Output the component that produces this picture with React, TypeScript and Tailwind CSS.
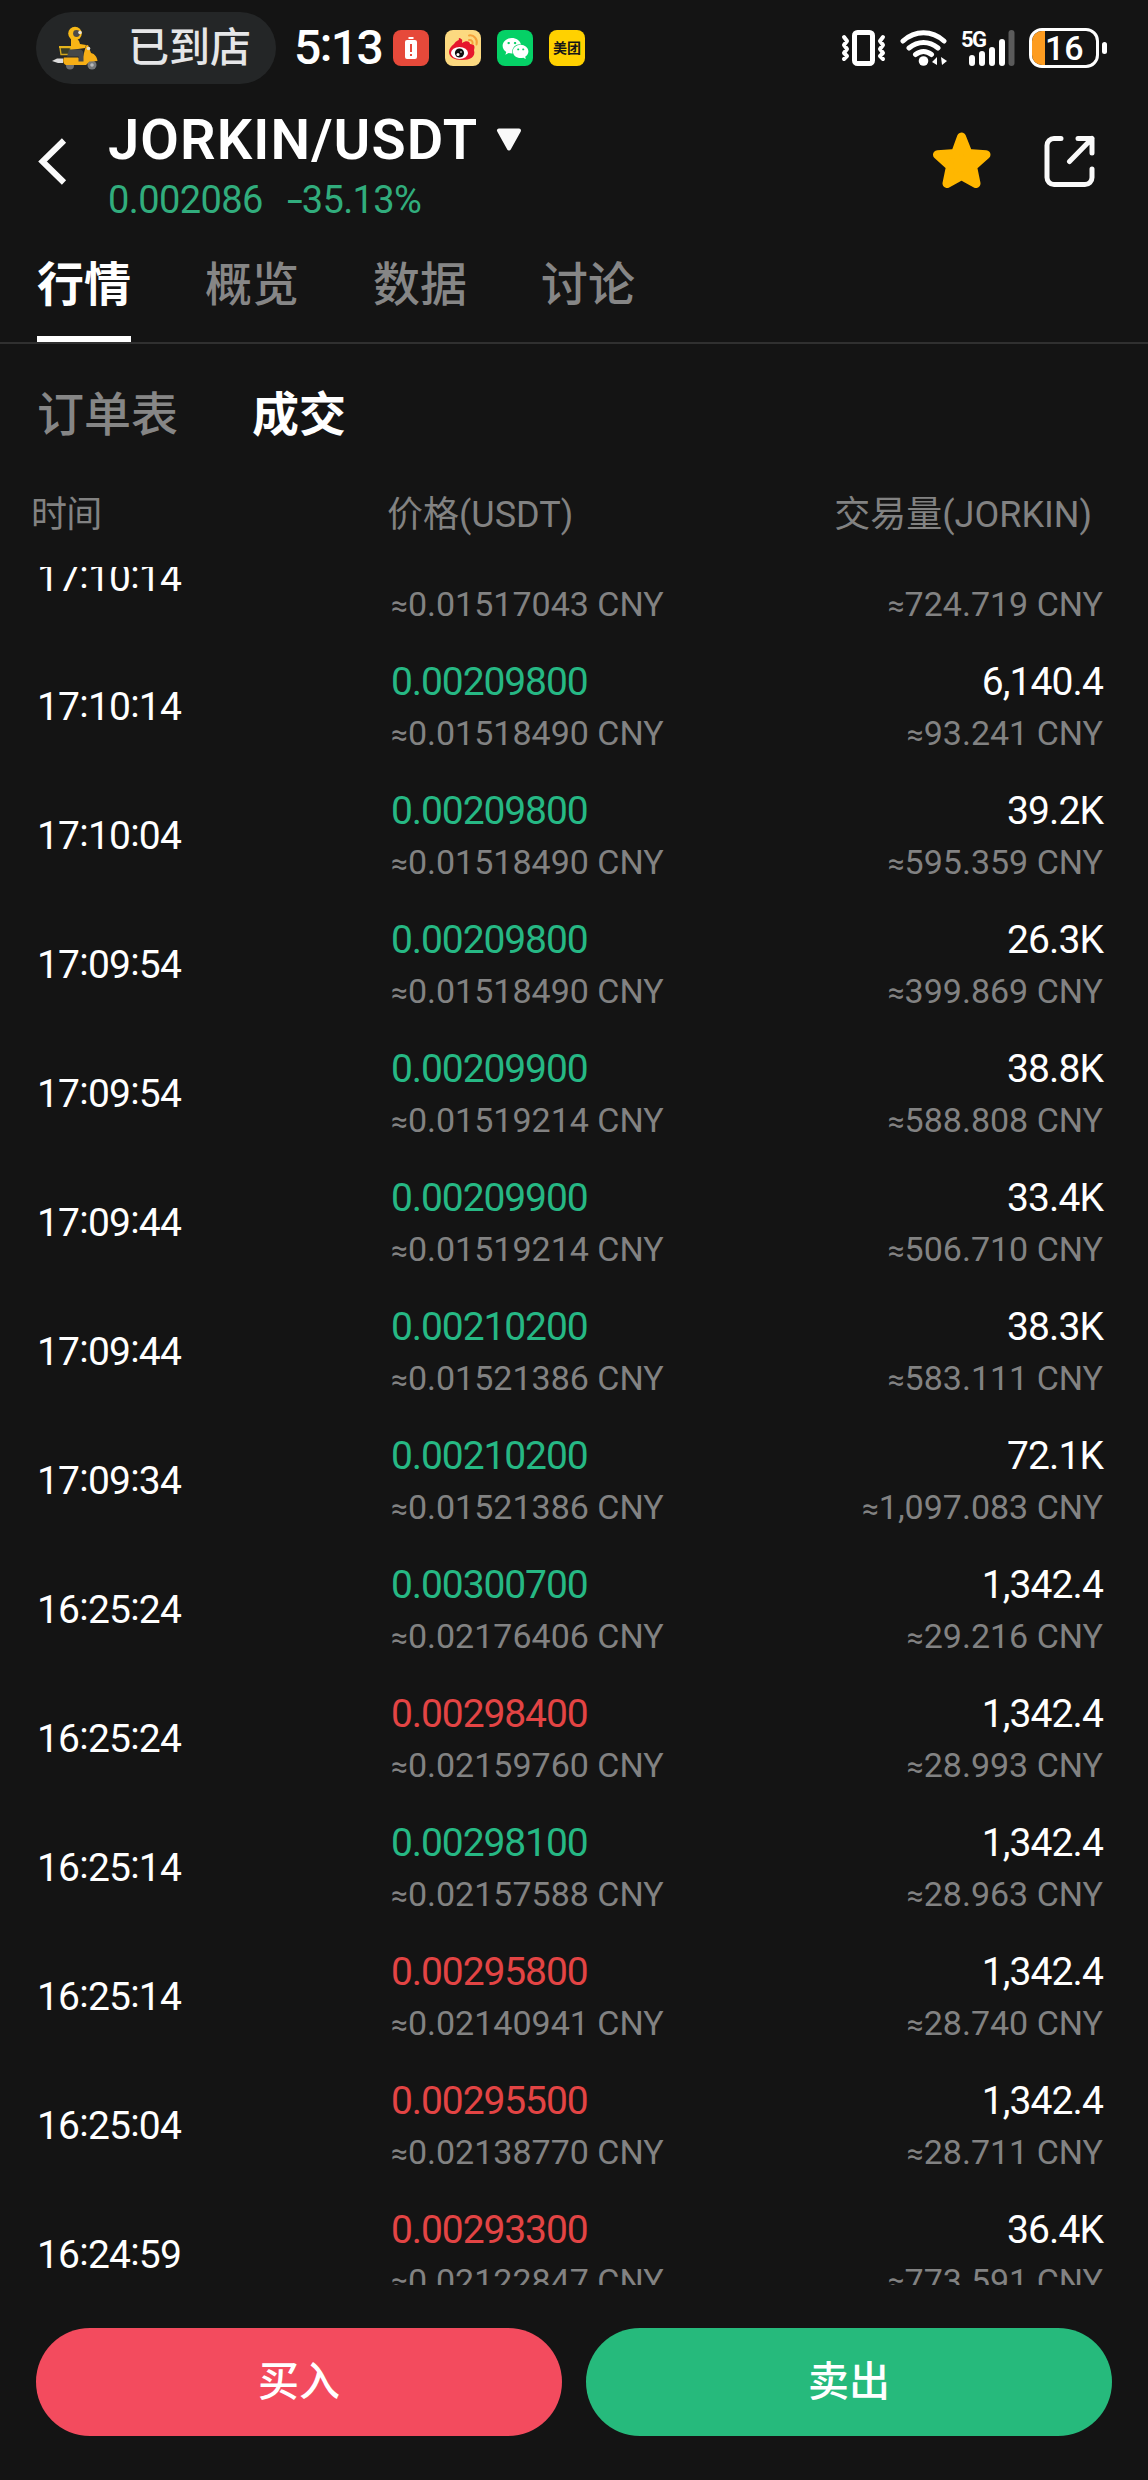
import { Fragment } from "react";
import { FaWeixin } from "react-icons/fa";

type Trade = {
  time: string;
  price: string;
  priceCny: string;
  amount: string;
  amountCny: string;
  side: "up" | "down";
};

const TABS = ["行情", "概览", "数据", "讨论"];

const TRADES: Trade[] = [
  { time: "17:10:14", price: "", priceCny: "0.01517043", amount: "", amountCny: "724.719", side: "up" },
  { time: "17:10:14", price: "0.00209800", priceCny: "0.01518490", amount: "6,140.4", amountCny: "93.241", side: "up" },
  { time: "17:10:04", price: "0.00209800", priceCny: "0.01518490", amount: "39.2K", amountCny: "595.359", side: "up" },
  { time: "17:09:54", price: "0.00209800", priceCny: "0.01518490", amount: "26.3K", amountCny: "399.869", side: "up" },
  { time: "17:09:54", price: "0.00209900", priceCny: "0.01519214", amount: "38.8K", amountCny: "588.808", side: "up" },
  { time: "17:09:44", price: "0.00209900", priceCny: "0.01519214", amount: "33.4K", amountCny: "506.710", side: "up" },
  { time: "17:09:44", price: "0.00210200", priceCny: "0.01521386", amount: "38.3K", amountCny: "583.111", side: "up" },
  { time: "17:09:34", price: "0.00210200", priceCny: "0.01521386", amount: "72.1K", amountCny: "1,097.083", side: "up" },
  { time: "16:25:24", price: "0.00300700", priceCny: "0.02176406", amount: "1,342.4", amountCny: "29.216", side: "up" },
  { time: "16:25:24", price: "0.00298400", priceCny: "0.02159760", amount: "1,342.4", amountCny: "28.993", side: "down" },
  { time: "16:25:14", price: "0.00298100", priceCny: "0.02157588", amount: "1,342.4", amountCny: "28.963", side: "up" },
  { time: "16:25:14", price: "0.00295800", priceCny: "0.02140941", amount: "1,342.4", amountCny: "28.740", side: "down" },
  { time: "16:25:04", price: "0.00295500", priceCny: "0.02138770", amount: "1,342.4", amountCny: "28.711", side: "down" },
  { time: "16:24:59", price: "0.00293300", priceCny: "0.02122847", amount: "36.4K", amountCny: "773.591", side: "down" },
];

// Clock text with the colons lifted to the middle of the digits
function Clock({ value }: { value: string }) {
  return (
    <>
      {value.split(":").map((part, i) => (
        <Fragment key={i}>
          {i > 0 && <span className="relative -top-[3px]">:</span>}
          {part}
        </Fragment>
      ))}
    </>
  );
}

function RiderIcon() {
  return (
    <svg width="46" height="46" viewBox="0 0 46 46" fill="none">
      <path d="M0 36l5-2.500h6v4.500H6z" fill="#dcdcdc" />
      <path d="M8 22.500h10.500v7H9z" fill="#3a3d24" stroke="#d3a61c" strokeWidth="1.400" />
      <path d="M7 22h13" stroke="#e5b41c" strokeWidth="2" />
      <circle cx="18" cy="40.500" r="4" fill="#6d6f71" />
      <circle cx="40" cy="40" r="4.500" fill="#77797b" />
      <circle cx="40" cy="40" r="1.800" fill="#b9babb" />
      <path d="M12 32.500h14l4 3 4-15 2-.5 3 8c4 1 6 4 6.500 8l-8 .5-3.500 3.500H14c-3-1-3.500-5-2-7.500z" fill="#f6ae16" />
      <path d="M19 14c5-2 8 0 9 5l6 1-1 3-7 1-7 1z" fill="#f9b416" />
      <path d="M17 24.500h10c3.500 0 4.500 2 4.500 5v7h-5v-5H15z" fill="#44474a" />
      <circle cx="23" cy="8.500" r="6.800" fill="#f8b917" />
      <circle cx="24.500" cy="8.500" r="3.400" fill="#4d4a48" />
      <circle cx="28" cy="7.500" r="1.800" fill="#e8e2d4" />
      <circle cx="36.500" cy="23.500" r="1.800" fill="#e8e2d4" />
    </svg>
  );
}

function WeiboIcon() {
  return (
    <svg width="36" height="36" viewBox="0 0 36 36" fill="none">
      <path d="M9 14c2-3 4-4 5-4-1-2 1-3 2-1 2 0 1 3 1 4 4-3 8-2 8 1 5 0 5 3 4 6 2 7-4 10-12 10C9 30 4 27 4 22c0-3 2-6 5-8z" fill="#e6162d" />
      <ellipse cx="14.500" cy="23" rx="8.500" ry="6" fill="#fff" />
      <circle cx="14.500" cy="23" r="4.600" fill="#111" />
      <circle cx="13" cy="24.500" r="1.500" fill="#fff" />
      <circle cx="16" cy="22" r=".8" fill="#fff" />
      <path d="M24 5.500c5-1 9 4 7.500 9M24 10c2.500-.5 4 1.500 3.500 3.500" stroke="#f5a13a" strokeWidth="2" strokeLinecap="round" />
    </svg>
  );
}

function StatusBar() {
  return (
    <div className="flex h-24 items-center pl-9 pr-[41px] shrink-0">
      <div className="flex h-[72px] w-60 items-center rounded-full bg-[#242627] pl-4">
        <RiderIcon />
        <span className="ml-[30px] whitespace-nowrap text-[41px] font-medium leading-none text-[#e6e6e8]">
          已到店
        </span>
      </div>
      <span className="ml-[18px] w-[99px] whitespace-nowrap text-[48px] font-medium leading-none tracking-[-1.600px]">
        <Clock value="5:13" />
      </span>
      <div className="flex gap-4">
        <div className="flex size-9 items-center justify-center rounded-lg bg-[#e6493a]">
          <svg width="12" height="22" viewBox="0 0 12 22">
            <path d="M3.500 0h5v2h-5zM2 3h8a2 2 0 0 1 2 2v15a2 2 0 0 1-2 2H2a2 2 0 0 1-2-2V5a2 2 0 0 1 2-2z" fill="#fff" />
            <path d="M5 7h2v8H5zM5 17h2v2H5z" fill="#e6493a" />
          </svg>
        </div>
        <div className="size-9 overflow-hidden rounded-lg bg-[#fcd980]">
          <WeiboIcon />
        </div>
        <div className="flex size-9 items-center justify-center rounded-lg bg-[#05d166]">
          <FaWeixin size={27} />
        </div>
        <div className="flex size-9 items-center justify-center whitespace-nowrap rounded-lg bg-[#ffd100] text-[14px] font-bold leading-none text-[#171717]">
          美团
        </div>
      </div>
      <div className="ml-auto flex items-center">
        <svg width="46" height="36" viewBox="0 0 46 36" fill="none" stroke="#fff" strokeLinecap="round" strokeLinejoin="round">
          <rect x="13.500" y="2.500" width="18" height="31" rx="3" strokeWidth="5" />
          <path d="M3 7l3 4-3 4 3 4-3 4 3 3-3 3M42 7l-3 4 3 4-3 4 3 4-3 3 3 3" strokeWidth="4" />
        </svg>
        <svg className="ml-[13px]" width="48" height="36" viewBox="0 0 48 36" fill="none" stroke="#fff" strokeWidth="5" strokeLinecap="round">
          <path d="M3 11c12-11 29-11 41 0M9 18c9-7.500 20-7.500 29 0M15.500 24.500c5-4 11-4 16 0" />
          <circle cx="23.500" cy="31" r="4.800" fill="#fff" stroke="none" />
          <path d="M32 32l5-5v8zM39 35v-8M41 27l6 4-5 4z" fill="#fff" stroke="none" />
        </svg>
        <div className="relative ml-[13px] h-9 w-[54px]">
          <span className="absolute -top-px left-0 text-[22px] font-bold leading-none tracking-[-1.500px]">
            5G
          </span>
          <svg width="54" height="36" viewBox="0 0 54 36" strokeWidth="6" strokeLinecap="round" stroke="#fff">
            <path d="M11 28v5M21 24v9M31 20v13M41 12v21" />
            <path d="M50.500 3v30" stroke="#5b5b5b" />
          </svg>
        </div>
        <div className="ml-[14px] flex h-10 w-[70px] overflow-hidden rounded-[13px] border-[3px] border-white">
          <div className="w-[13px] bg-[#fd9c20]" />
          <span className="text-[34px] font-medium leading-[35px]">16</span>
        </div>
        <div className="ml-[3px] h-3 w-[5px] rounded-full bg-white" />
      </div>
    </div>
  );
}

function Header() {
  return (
    <div className="flex h-[134px] items-start pl-[38px] pr-[52px] pt-[14px] shrink-0">
      <svg className="mt-[28px]" width="30" height="47" viewBox="0 0 30 47" fill="none">
        <path d="M26 2.500L4.500 23.500 26 44.500" stroke="#fafafa" strokeWidth="6" />
      </svg>
      <div className="ml-[40px]">
        <div className="flex items-center">
          <h1 className="whitespace-nowrap text-[56px] font-semibold leading-[60px] tracking-[1.100px]">
            JORKIN/USDT
          </h1>
          <svg className="ml-[18px]" width="26" height="24" viewBox="0 0 26 24">
            <path d="M3 2.500h20L13 20.500z" fill="#fafafa" stroke="#fafafa" strokeWidth="4" strokeLinejoin="round" />
          </svg>
        </div>
        <div className="mt-[5px] flex whitespace-pre text-[38px] leading-[50px] tracking-[-0.600px] text-[#31ad7d]">
          <span>0.002086</span>
          <span className="ml-[24px] inline-block origin-left scale-x-150">-</span>
          <span className="ml-[5px]">35.13%</span>
        </div>
      </div>
      <svg className="ml-auto mt-[22px]" width="58" height="57" viewBox="0 0 58 57">
        <path
          d="M28.500 5l6.500 16.500 18 1.200-13.500 11.800 3.500 17-14.500-8-14.500 8 3.500-17L4.500 22.700l18-1.200z"
          fill="#ffb700" stroke="#ffb700" strokeWidth="9" strokeLinejoin="round"
        />
      </svg>
      <svg className="ml-[53px] mt-[25px]" width="52" height="52" viewBox="0 0 52 52" fill="none" stroke="#fafafa" strokeWidth="5" strokeLinecap="round" strokeLinejoin="round">
        <path d="M17 3.500H10A7 7 0 0 0 3 10.500v32a7 7 0 0 0 7 7h31a7 7 0 0 0 7-7V34M34 3.500h14V18M48 3.500L25.500 26.500" />
      </svg>
    </div>
  );
}

function Tabs() {
  return (
    <div className="flex h-[114px] shrink-0 gap-[74px] border-b-2 border-[#303030] pl-[37px] text-[47px]">
      {TABS.map((tab, i) => (
        <div
          key={tab}
          className={
            i === 0
              ? "flex h-28 w-[94px] flex-col justify-between whitespace-nowrap font-bold"
              : "w-[94px] whitespace-nowrap font-medium text-[#868686]"
          }
        >
          <span className="mt-[27px] block leading-[56px]">{tab}</span>
          {i === 0 && <div className="h-1.5 bg-white" />}
        </div>
      ))}
    </div>
  );
}

function Cny({ value }: { value: string }) {
  return (
    <div className="whitespace-nowrap text-[34px] leading-[52px] text-[#828282]">
      <span className="text-[30px]">≈</span>
      {value} CNY
    </div>
  );
}

function TradeRow({ trade }: { trade: Trade }) {
  return (
    <div className="flex h-[129px] shrink-0 items-center pl-[37px] pr-[45px]">
      <div className="w-[354px] text-[39px] leading-[52px] tracking-[-0.800px]">
        <Clock value={trade.time} />
      </div>
      <div className="flex-1 pt-1">
        <div
          className={
            trade.side === "up"
              ? "h-[51px] text-[39px] leading-[52px] tracking-[-1.100px] text-[#26b884]"
              : "h-[51px] text-[39px] leading-[52px] tracking-[-1.100px] text-[#e34444]"
          }
        >
          {trade.price}
        </div>
        <Cny value={trade.priceCny} />
      </div>
      <div className="pt-1 text-right">
        <div className="h-[51px] text-[39px] leading-[52px] tracking-[-0.900px]">
          {trade.amount}
        </div>
        <Cny value={trade.amountCny} />
      </div>
    </div>
  );
}

export default function App() {
  return (
    <div className="flex h-[2480px] w-[1148px] flex-col overflow-hidden bg-[#141414] font-[Roboto,'Noto_Sans_CJK_SC',sans-serif] text-white">
      <StatusBar />
      <Header />
      <Tabs />

      <div className="flex h-[140px] shrink-0 items-center gap-[74px] pl-[37px] pt-0.5 text-[47px] leading-[60px]">
        <span className="font-medium text-[#868686]">订单表</span>
        <span className="font-bold">成交</span>
      </div>

      <div className="flex h-[83px] shrink-0 items-start pl-[31px] pr-[56px] pt-[5px] text-[36px] leading-[52px] text-[#828282]">
        <span className="w-[356px] tracking-[-0.800px]">时间</span>
        <span className="flex-1">价格(USDT)</span>
        <span>交易量(JORKIN)</span>
      </div>

      <div className="h-[1718px] shrink-0 overflow-hidden">
        <div className="-mt-[54px] flex flex-col">
          {TRADES.map((trade, i) => (
            <TradeRow key={i} trade={trade} />
          ))}
        </div>
      </div>

      <div className="flex shrink-0 gap-6 px-9 pt-[43px] text-[41px] font-medium">
        <button className="h-[108px] flex-1 rounded-full bg-[#f34b5e] pt-0.5">买入</button>
        <button className="h-[108px] flex-1 rounded-full bg-[#26ba7c] pt-0.5">卖出</button>
      </div>
    </div>
  );
}
